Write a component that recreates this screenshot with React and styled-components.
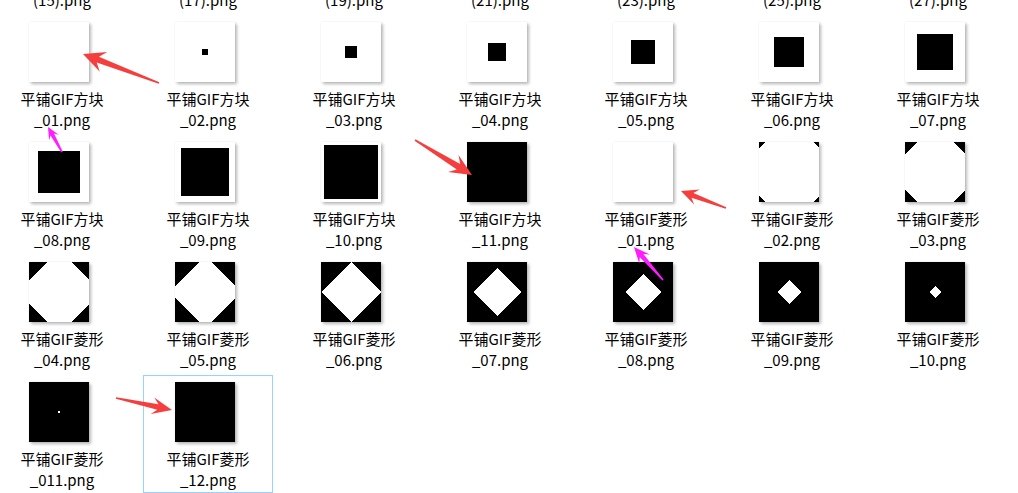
import React from 'react';
import styled, { createGlobalStyle } from 'styled-components';

const GlobalStyle = createGlobalStyle`
  html, body {
    margin: 0;
    padding: 0;
    background: #fff;
  }
  body {
    font-family: 'Noto Sans CJK SC', 'Microsoft YaHei', sans-serif;
  }
`;

const Pane = styled.div`
  position: relative;
  width: 1018px;
  height: 493px;
  overflow: hidden;
  background: #fff;
`;

// scrolled explorer view: first row is mostly above the fold
const Grid = styled.div`
  display: grid;
  grid-template-columns: repeat(7, 130px);
  column-gap: 16px;
  row-gap: 2px;
  margin: -105px 0 0 -3px;
`;

const Cell = styled.div`
  box-sizing: border-box;
  height: 118px;
  padding-top: 6px;
  border: 1px solid ${(p) => (p.$selected ? '#99d1ff' : 'transparent')};
  display: flex;
  flex-direction: column;
  align-items: center;
`;

const Thumb = styled.svg`
  display: block;
  flex: none;
  width: 60px;
  height: 60px;
  margin-right: 6px;
  box-shadow: 0 0 1px rgba(0, 0, 0, 0.12), 2px 2px 3px rgba(0, 0, 0, 0.28);
`;

const Label = styled.div`
  margin-top: 6px;
  font-size: 15px;
  line-height: 21px;
  color: #000;
  text-align: center;
  white-space: nowrap;

  span {
    display: block;
  }
`;

const Overlay = styled.svg`
  position: absolute;
  left: 0;
  top: 0;
  pointer-events: none;
`;

const Tile = ({ kind, size }) => (
  <Thumb viewBox="0 0 60 60" shapeRendering="crispEdges">
    {kind === 'square' ? (
      <>
        <rect width="60" height="60" fill="#fff" />
        {size > 0 && (
          <rect x={30 - size / 2} y={30 - size / 2} width={size} height={size} fill="#000" />
        )}
      </>
    ) : (
      <>
        <rect width="60" height="60" fill="#000" />
        {size > 2 && (
          <polygon
            points={`30,${30 - size} ${30 + size},30 30,${30 + size} ${30 - size},30`}
            fill="#fff"
          />
        )}
        {size > 0 && size <= 2 && <rect x="29" y="29" width="2" height="2" fill="#fff" />}
      </>
    )}
  </Thumb>
);

const top = ['15', '17', '19', '21', '23', '25', '27'].map((n) => ({
  a: '平铺GIF素材',
  b: `(${n}).png`,
  kind: 'square',
  size: 20,
}));

const squares = [0, 6, 12, 18, 24, 30, 36, 42, 48, 54, 60].map((size, i) => ({
  a: '平铺GIF方块',
  b: `_${String(i + 1).padStart(2, '0')}.png`,
  kind: 'square',
  size,
}));

const diamonds = [60, 54, 48, 42, 36, 30, 24, 18, 12, 6, 1, 0].map((size, i) => ({
  a: '平铺GIF菱形',
  b: i === 10 ? '_011.png' : `_${String(i + 1).padStart(2, '0')}.png`,
  kind: 'diamond',
  size,
}));

const files = [...top, ...squares, ...diamonds];

const arrowPoints = (x1, y1, x2, y2, L, H, s) => {
  const len = Math.hypot(x1 - x2, y1 - y2);
  const ux = (x1 - x2) / len;
  const uy = (y1 - y2) / len;
  const vx = -uy;
  const vy = ux;
  const pt = (a, b) => `${(x2 + ux * a + vx * b).toFixed(1)},${(y2 + uy * a + vy * b).toFixed(1)}`;
  return [
    pt(0, 0),
    pt(L, H),
    pt(L * 0.72, s),
    pt(len, 0.8),
    pt(len, -0.8),
    pt(L * 0.72, -s),
    pt(L, -H),
  ].join(' ');
};

const arrows = [
  { c: '#f53f3f', p: [159, 83, 83, 54, 22, 10.5, 3.2] },
  { c: '#ff1dff', p: [62, 152, 48, 127, 12, 5.5, 2] },
  { c: '#f53f3f', p: [415, 140, 472, 175, 22, 10, 3.2] },
  { c: '#f53f3f', p: [726, 208, 681, 191, 17, 8, 2.6] },
  { c: '#ff1dff', p: [663, 280, 634, 247, 16, 7, 2.4] },
  { c: '#f53f3f', p: [116, 398, 172, 410, 20, 8.5, 2.8] },
];

export default function App() {
  return (
    <Pane>
      <GlobalStyle />
      <Grid>
        {files.map((f, i) => (
          <Cell key={i} $selected={f.kind === 'diamond' && f.b === '_12.png'}>
            <Tile kind={f.kind} size={f.size} />
            <Label>
              <span>{f.a}</span>
              <span>{f.b}</span>
            </Label>
          </Cell>
        ))}
      </Grid>
      <Overlay width="1018" height="493" viewBox="0 0 1018 493">
        {arrows.map((a, i) => (
          <polygon key={i} points={arrowPoints(...a.p)} fill={a.c} />
        ))}
      </Overlay>
    </Pane>
  );
}
